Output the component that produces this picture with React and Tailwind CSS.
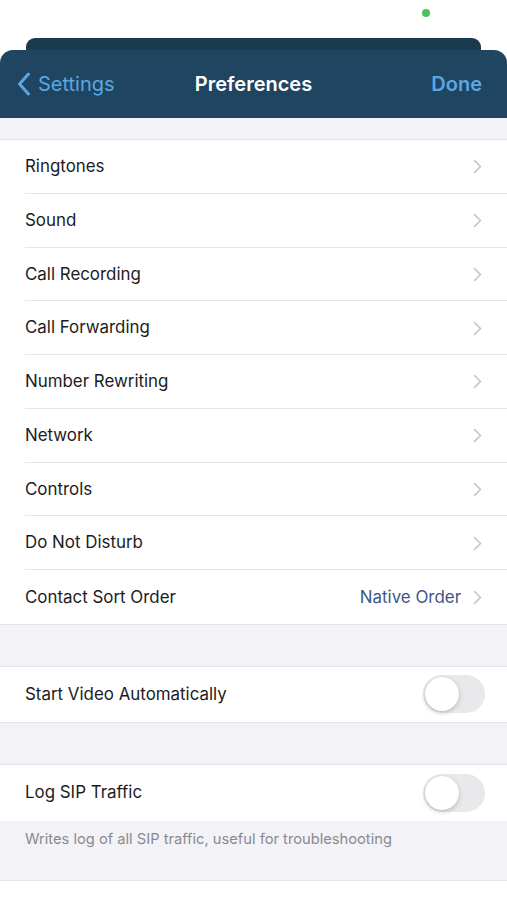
import React from "react";

const Chevron = () => (
  <svg width="9" height="15" viewBox="0 0 9 15" fill="none" className="shrink-0">
    <path d="M1.5 1.5 L7.5 7.5 L1.5 13.5" stroke="#c4c4c8" strokeWidth="1.6" strokeLinecap="round" strokeLinejoin="round" />
  </svg>
);

const Toggle = () => (
  <div className="relative w-[62px] h-[38px] rounded-full bg-[#e9e9eb]">
    <div className="absolute left-[2px] top-[2px] w-[34px] h-[34px] rounded-full bg-white shadow-[0_2px_5px_rgba(0,0,0,0.18),0_0_1px_rgba(0,0,0,0.15)]"></div>
  </div>
);

const rows = [
  "Ringtones",
  "Sound",
  "Call Recording",
  "Call Forwarding",
  "Number Rewriting",
  "Network",
  "Controls",
  "Do Not Disturb",
];

const Row = ({ label, value, last }) => (
  <div className="pl-[25px] bg-white">
    <div className={`h-[53.75px] flex items-center pr-[25px] pt-[1px] ${last ? "" : "border-b border-[#e6e6ea]"}`}>
      <span className="flex-1 text-[16.9px] text-[#1c1c1e]">{label}</span>
      {value && <span className="text-[16.9px] text-[#3d5686] mr-[12px]">{value}</span>}
      <Chevron />
    </div>
  </div>
);

const App = () => {
  return (
    <div className="w-full min-h-[900px] bg-white" style={{ fontFamily: "Inter, 'Noto Sans', sans-serif" }}>
      <div className="h-[38px] flex justify-end pr-[77px] pt-[9px]">
        <div className="w-[8px] h-[8px] rounded-full bg-[#4cc35a]"></div>
      </div>
      <div className="mx-[26px] h-[12px] rounded-t-[9px] bg-[#1a3a50]"></div>
      <div className="h-[68px] rounded-t-[13px] bg-[#1f4560] flex items-center px-[17px]">
        <div className="flex-1 flex items-center gap-[7px] text-[20px] text-[#59a8e3]">
          <svg width="14" height="24" viewBox="0 0 14 24" fill="none">
            <path d="M11.5 2 L2.5 12 L11.5 22" stroke="#59a8e3" strokeWidth="3" strokeLinecap="round" strokeLinejoin="round" />
          </svg>
          <span>Settings</span>
        </div>
        <div className="text-center text-white text-[20px] font-semibold">Preferences</div>
        <div className="flex-1 flex justify-end">
          <span className="text-[20px] font-semibold text-[#59a8e3] mr-[8px]">Done</span>
        </div>
      </div>
      <div className="h-[22px] bg-[#f2f2f7] border-b border-[#e3e3e8]"></div>
      <div className="border-b border-[#e3e3e8]">
        {rows.map((r) => (
          <Row key={r} label={r} />
        ))}
        <Row label="Contact Sort Order" value="Native Order" last />
      </div>
      <div className="h-[42px] bg-[#f2f2f7] border-b border-[#e3e3e8]"></div>
      <div className="h-[56px] bg-white flex items-center pl-[25px] pr-[22px] border-b border-[#e3e3e8]">
        <span className="flex-1 text-[16.9px] text-[#1c1c1e]">Start Video Automatically</span>
        <Toggle />
      </div>
      <div className="h-[42px] bg-[#f2f2f7] border-b border-[#e3e3e8]"></div>
      <div className="h-[56px] bg-white flex items-center pl-[25px] pr-[22px]">
        <span className="flex-1 text-[16.9px] text-[#1c1c1e]">Log SIP Traffic</span>
        <Toggle />
      </div>
      <div className="h-[60px] bg-[#f2f2f7] border-b border-[#e3e3e8] pl-[25px] pt-[5px]">
        <span className="text-[14.7px] text-[#8a8a8e]">Writes log of all SIP traffic, useful for troubleshooting</span>
      </div>
    </div>
  );
};

export default App;
